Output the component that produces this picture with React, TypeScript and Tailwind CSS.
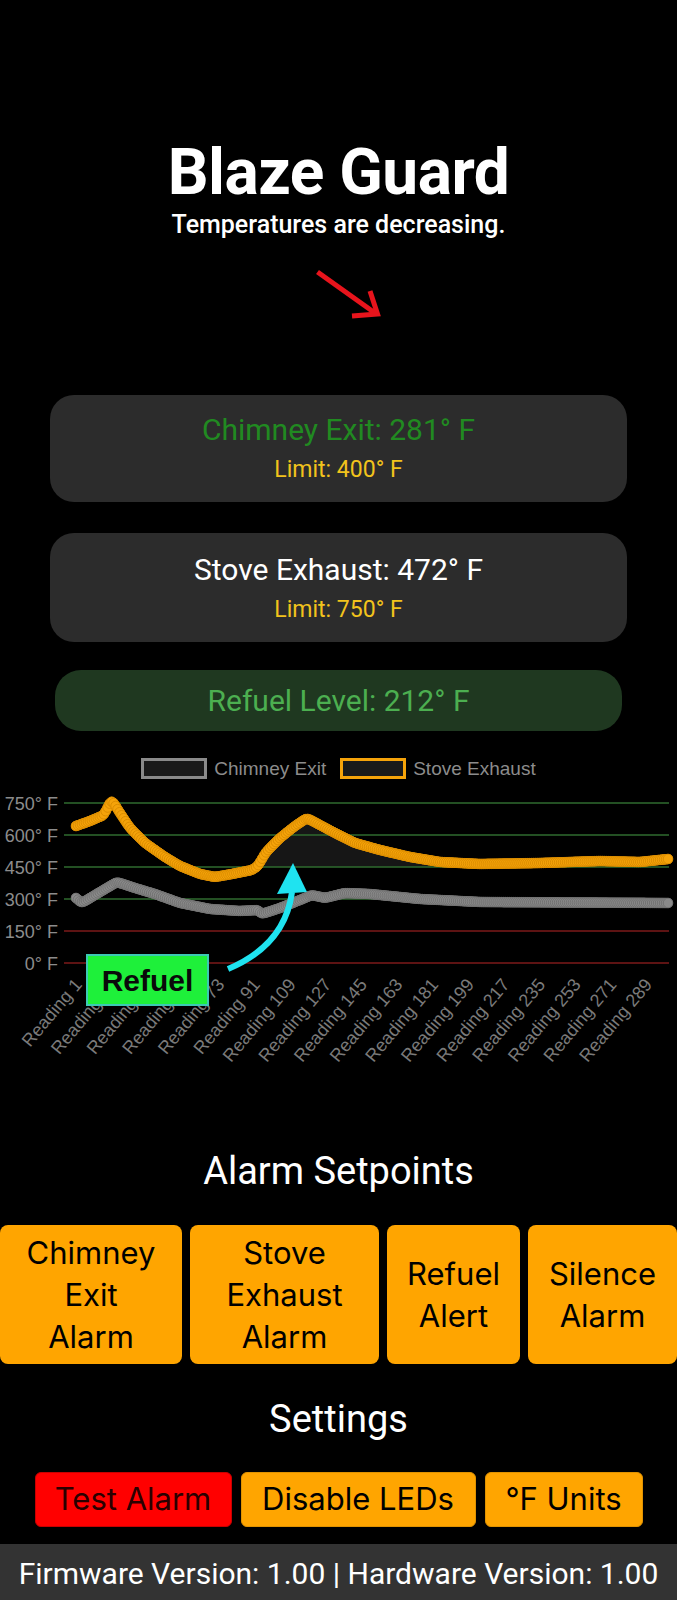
import React from "react";

// chart svg starts at page y 785
const TOP = 785;
const X0 = 76;
const X1 = 668;
const N = 300;

// control points in page coordinates, read off the reference
const stove: [number, number][] = [
  [76, 826], [90, 821], [104, 815], [112, 799], [118, 810], [130, 828],
  [145, 843], [165, 857], [180, 866], [200, 874], [215, 877], [232, 874],
  [252, 870], [258, 866], [266, 852], [280, 838], [295, 826], [307, 818],
  [318, 824], [335, 833], [355, 843], [380, 850], [410, 857], [440, 862],
  [480, 864], [540, 863], [600, 861], [640, 862], [668, 859],
];

const chimney: [number, number][] = [
  [76, 898], [82, 903], [95, 895], [117, 882], [135, 888], [155, 894],
  [180, 903], [210, 909], [240, 911], [258, 910], [262, 914], [280, 908],
  [300, 900], [312, 895], [325, 898], [345, 893], [370, 894], [420, 899],
  [480, 902], [668, 903],
];

function series(ctrl: [number, number][]) {
  const out: [number, number][] = [];
  for (let i = 0; i < N; i++) {
    const x = X0 + (i * (X1 - X0)) / (N - 1);
    let j = 0;
    while (j < ctrl.length - 2 && ctrl[j + 1][0] < x) j++;
    const [xa, ya] = ctrl[j];
    const [xb, yb] = ctrl[j + 1];
    const t = Math.min(1, Math.max(0, (x - xa) / (xb - xa)));
    out.push([x, ya + (yb - ya) * t - TOP]);
  }
  // light smoothing
  for (let i = 1; i < out.length - 1; i++) {
    out[i][1] = (out[i - 1][1] + out[i][1] + out[i + 1][1]) / 3;
  }
  return out;
}

const stovePts = series(stove);
const chimneyPts = series(chimney);

const grid = [
  { label: "750° F", y: 18, color: "#2f6b2f" },
  { label: "600° F", y: 50, color: "#2f6b2f" },
  { label: "450° F", y: 82, color: "#2f6b2f" },
  { label: "300° F", y: 114, color: "#2f6b2f" },
  { label: "150° F", y: 146, color: "#7c1a1a" },
  { label: "0° F", y: 178, color: "#7c1a1a" },
];

const readings = Array.from({ length: 17 }, (_, i) => 1 + i * 18);

function Line({ pts, fill, edge }: { pts: [number, number][]; fill: string; edge: string }) {
  return (
    <g>
      <polyline
        points={pts.map((p) => p.join(",")).join(" ")}
        fill="none"
        stroke={fill}
        strokeWidth={10}
        strokeLinejoin="round"
        strokeLinecap="round"
      />
      {pts.map(([x, y], i) => (
        <circle key={i} cx={x} cy={y} r={4.8} fill={fill} stroke={edge} strokeWidth={1} />
      ))}
    </g>
  );
}

function Chart() {
  const shade =
    stovePts
      .filter(([x]) => x >= 250 && x <= 440)
      .map(([x, y]) => `${x},${Math.min(y, 82)}`)
      .join(" ") + ` 440,82 250,82`;
  return (
    <svg width={677} height={300} className="block" style={{ fontFamily: "'Liberation Sans', Arial, sans-serif" }}>
      <polygon points={shade} fill="#161616" />
      {grid.map((g) => (
        <g key={g.label}>
          <line x1={64} x2={669} y1={g.y} y2={g.y} stroke={g.color} strokeWidth={1.5} />
          <text x={58} y={g.y + 6.5} textAnchor="end" fontSize={18} fill="#8c8c8c">
            {g.label}
          </text>
        </g>
      ))}
      {readings.map((r) => {
        const x = X0 + ((r - 1) * (X1 - X0)) / (N - 1) + 2;
        const y = 196;
        return (
          <text
            key={r}
            x={x}
            y={y}
            dy="0.35em"
            textAnchor="end"
            fontSize={18}
            fill="#7a7a7a"
            transform={`rotate(-50 ${x} ${y})`}
          >
            {`Reading ${r}`}
          </text>
        );
      })}
      <Line pts={chimneyPts} fill="#8a8a8a" edge="#727272" />
      <Line pts={stovePts} fill="#f5a30a" edge="#dc8d00" />
      {/* annotation */}
      <path d="M228 184 Q285 160 292 107" fill="none" stroke="#1fe3f0" strokeWidth={6} />
      <polygon points="293,78 277,109 307,107" fill="#1fe3f0" />
      <rect x={87} y={170} width={121} height={50} fill="#1ef03a" stroke="#3cc9b4" strokeWidth={2} />
      <text x={147.5} y={206} textAnchor="middle" fontSize={30} fontWeight={700} fill="#0a0a0a">
        Refuel
      </text>
    </svg>
  );
}

function Card({ title, titleColor, limit, className }: { title: string; titleColor: string; limit: string; className: string }) {
  return (
    <div className={`mx-auto w-[577px] rounded-[24px] bg-[#2c2c2c] pb-[17px] pt-[15px] text-center ${className}`}>
      <div className={`text-[30px] leading-[40px] ${titleColor}`}>{title}</div>
      <div className="mt-[5px] text-[23px] leading-[30px] text-[#f2c31c]">{limit}</div>
    </div>
  );
}

function AlarmButton({ lines }: { lines: string[] }) {
  return (
    <button className="flex h-[139px] flex-col items-center justify-center rounded-[8px] bg-[#ffa500] text-center font-['Inter',sans-serif] text-[31px] leading-[42px] text-black">
      {lines.map((l) => (
        <span key={l}>{l}</span>
      ))}
    </button>
  );
}

export default function App() {
  return (
    <div className="min-h-[1600px] w-[677px] overflow-hidden bg-black font-['Roboto',sans-serif] text-white">
      <h1 className="pt-[141px] text-center text-[64px] font-bold leading-none tracking-[-0.5px]">Blaze Guard</h1>
      <p className="mt-[5px] text-center text-[25px] font-medium leading-[29px]">Temperatures are decreasing.</p>
      <div className="mt-[29px] flex justify-center">
        <svg width={90} height={52}>
          <line x1={23.5} y1={4} x2={81} y2={45} stroke="#e8141c" strokeWidth={5} />
          <polyline points="58,48 83.5,46 76,23" fill="none" stroke="#e8141c" strokeWidth={5} />
        </svg>
      </div>

      <Card className="mt-[75px]" title="Chimney Exit: 281° F" titleColor="text-[#218a21]" limit="Limit: 400° F" />
      <Card className="mt-[31px] pt-[17px]" title="Stove Exhaust: 472° F" titleColor="text-white" limit="Limit: 750° F" />
      <div className="mx-auto mt-[28px] flex h-[61px] w-[567px] items-center justify-center rounded-[26px] bg-[#1f3820] text-[30px] text-[#4caf50]">
        Refuel Level: 212° F
      </div>

      <div className="mt-[27px] flex items-center justify-center gap-[14px] font-['Liberation_Sans',Arial,sans-serif] text-[19px] leading-[21px] text-[#8c8c8c]">
        <div className="flex items-center gap-[7px]">
          <span className="h-[21px] w-[66px] border-[3px] border-[#8a8a8a] bg-[#1a1a1a]" />
          <span>Chimney Exit</span>
        </div>
        <div className="flex items-center gap-[7px]">
          <span className="h-[21px] w-[66px] border-[3px] border-[#f5a30a] bg-[#1a1a1a]" />
          <span>Stove Exhaust</span>
        </div>
      </div>
      <div className="mt-[6px]">
        <Chart />
      </div>

      <h2 className="mt-[66px] text-center text-[38px] leading-[40px]">Alarm Setpoints</h2>
      <div className="mt-[34px] grid grid-cols-[182px_189px_133px_149px] gap-[8px]">
        <AlarmButton lines={["Chimney", "Exit", "Alarm"]} />
        <AlarmButton lines={["Stove", "Exhaust", "Alarm"]} />
        <AlarmButton lines={["Refuel", "Alert"]} />
        <AlarmButton lines={["Silence", "Alarm"]} />
      </div>

      <h2 className="mt-[35px] text-center text-[38px] leading-[40px]">Settings</h2>
      <div className="mt-[33px] flex justify-center gap-[9px] font-['Inter',sans-serif] text-[31px]">
        <button className="h-[55px] w-[197px] rounded-[6px] border border-[#c80000] bg-[#ff0000] text-[#2a0000]">Test Alarm</button>
        <button className="h-[55px] w-[235px] rounded-[6px] border border-[#e09200] bg-[#ffa500] text-black">Disable LEDs</button>
        <button className="h-[55px] w-[158px] rounded-[6px] border border-[#e09200] bg-[#ffa500] text-black">°F Units</button>
      </div>

      <footer className="mt-[17px] h-[60px] bg-[#333333] pt-[6px] text-center text-[30px] leading-[48px] whitespace-nowrap">
        Firmware Version: 1.00 | Hardware Version: 1.00
      </footer>
    </div>
  );
}
